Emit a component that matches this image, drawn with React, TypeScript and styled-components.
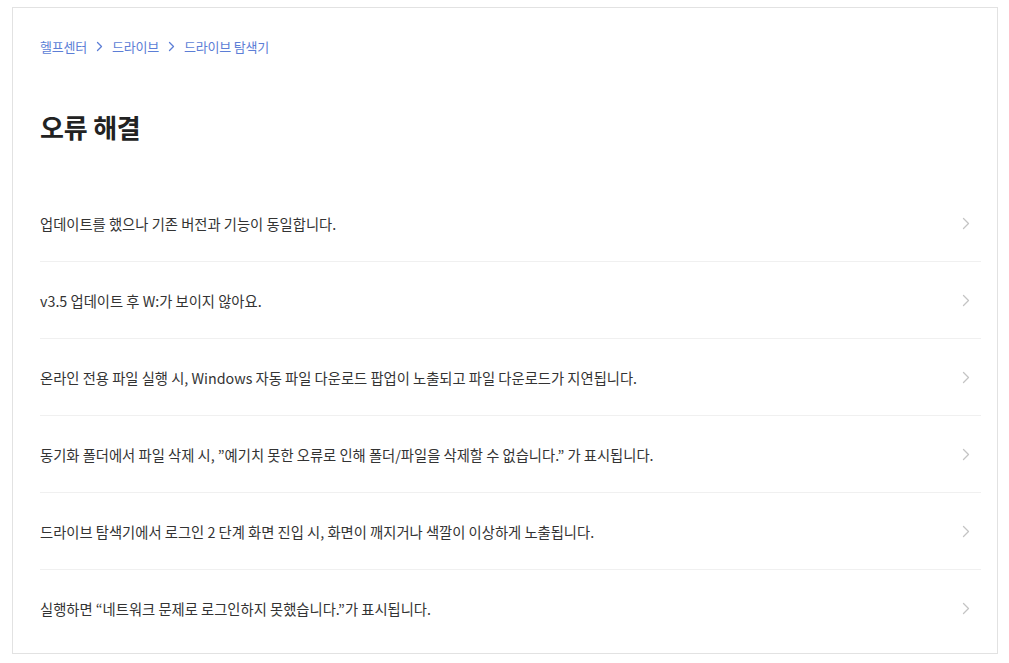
import React from "react";
import styled, { createGlobalStyle } from "styled-components";

const GlobalStyle = createGlobalStyle`
  body {
    margin: 0;
    background: #ffffff;
    font-family: "Noto Sans CJK KR", "Noto Sans", sans-serif;
  }
`;

const Page = styled.div`
  padding: 7px 11px 0 12px;
`;

const Panel = styled.section`
  border: 1px solid #e2e2e2;
  height: 647px;
  box-sizing: border-box;
  padding: 29px 16px 0 27px;
`;

const Breadcrumb = styled.nav`
  display: flex;
  align-items: center;
  gap: 9px;
  height: 18px;
  font-size: 13px;
  letter-spacing: -0.2px;
  color: #5c7ed6;
`;

const Crumb = styled.a`
  color: inherit;
  text-decoration: none;
`;

const Title = styled.h1`
  margin: 56px 0 42px;
  height: 32px;
  line-height: 32px;
  font-size: 26px;
  font-weight: 700;
  letter-spacing: -0.2px;
  color: #222222;
`;

const List = styled.ul`
  list-style: none;
  margin: 0;
  padding: 0;
`;

const Row = styled.li<{ $last?: boolean }>`
  display: flex;
  align-items: center;
  justify-content: space-between;
  height: 76px;
  border-bottom: ${(p) => (p.$last ? "none" : "1px solid #f0f0f0")};
  padding-right: 11px;
  cursor: pointer;
`;

const RowText = styled.span`
  font-size: 14.3px;
  letter-spacing: 0;
  color: #333333;
`;

const Chevron = () => (
  <svg width="8" height="13" viewBox="0 0 8 13" fill="none">
    <polyline
      points="1.5,1.5 6.5,6.5 1.5,11.5"
      stroke="#c4c4c4"
      strokeWidth="1.3"
      strokeLinecap="round"
      strokeLinejoin="round"
    />
  </svg>
);

const SepIcon = () => (
  <svg width="7" height="11" viewBox="0 0 7 11" fill="none">
    <polyline
      points="1.5,1.5 5.5,5.5 1.5,9.5"
      stroke="#5c7ed6"
      strokeWidth="1.3"
      strokeLinecap="round"
      strokeLinejoin="round"
    />
  </svg>
);

const items = [
  "업데이트를 했으나 기존 버전과 기능이 동일합니다.",
  "v3.5 업데이트 후 W:가 보이지 않아요.",
  "온라인 전용 파일 실행 시, Windows 자동 파일 다운로드 팝업이 노출되고 파일 다운로드가 지연됩니다.",
  "동기화 폴더에서 파일 삭제 시, ”예기치 못한 오류로 인해 폴더/파일을 삭제할 수 없습니다.” 가 표시됩니다.",
  "드라이브 탐색기에서 로그인 2 단계 화면 진입 시, 화면이 깨지거나 색깔이 이상하게 노출됩니다.",
  "실행하면 “네트워크 문제로 로그인하지 못했습니다.”가 표시됩니다.",
];

function App() {
  return (
    <Page>
      <GlobalStyle />
      <Panel>
        <Breadcrumb>
          <Crumb href="#">헬프센터</Crumb>
          <SepIcon />
          <Crumb href="#">드라이브</Crumb>
          <SepIcon />
          <Crumb href="#">드라이브 탐색기</Crumb>
        </Breadcrumb>
        <Title>오류 해결</Title>
        <List>
          {items.map((text, i) => (
            <Row key={i} $last={i === items.length - 1}>
              <RowText>{text}</RowText>
              <Chevron />
            </Row>
          ))}
        </List>
      </Panel>
    </Page>
  );
}

export default App;
